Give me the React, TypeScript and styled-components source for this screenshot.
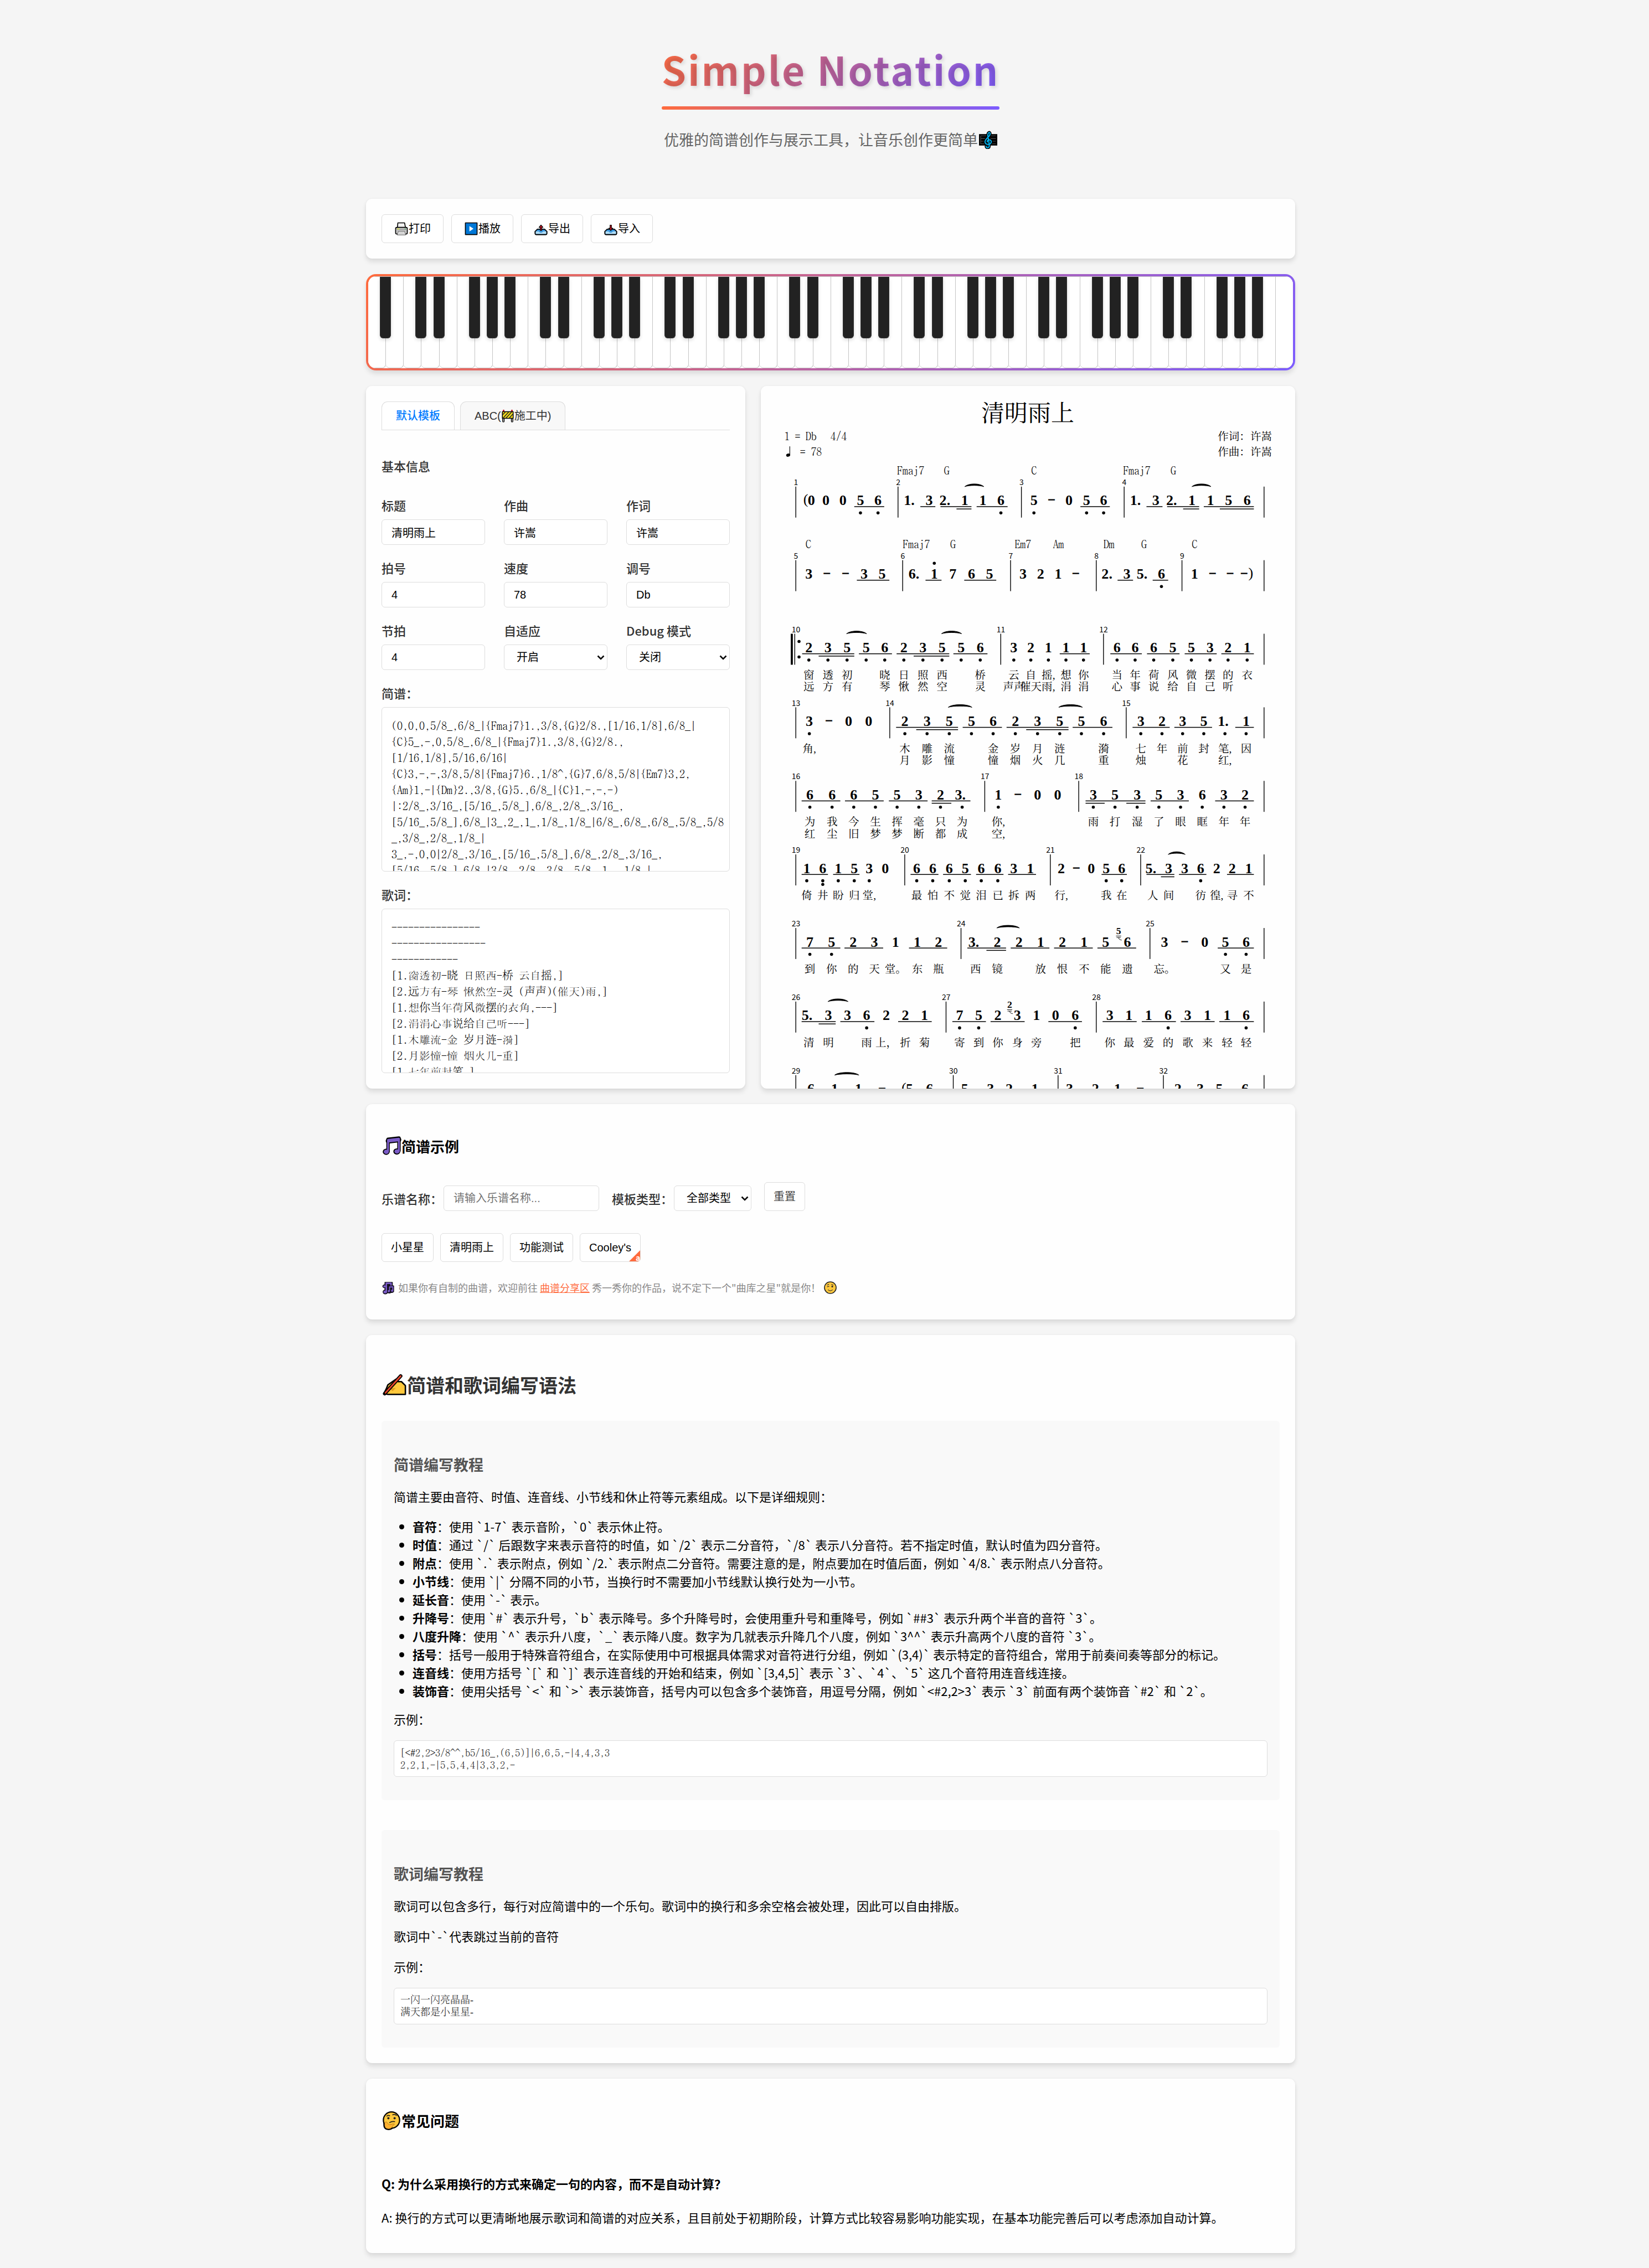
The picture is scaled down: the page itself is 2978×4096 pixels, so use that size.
import React from "react";
import type { ReactNode } from "react";
import styled, { createGlobalStyle, css } from "styled-components";

/* ---------- tokens ---------- */

const sans = `"Noto Sans CJK SC", "Noto Sans", sans-serif`;
const control = `"Liberation Sans", "Noto Sans CJK SC", sans-serif`;
const mono = `"BatangChe", "Noto Serif CJK SC", "Noto Sans Mono CJK SC", monospace`;
const song = `"Liberation Serif", "Noto Serif CJK SC", "Noto Sans CJK SC", serif`;

const orange = "#ff6b3d";
const violet = "#7c5cff";
const line = "#dddddd";

const GlobalStyle = createGlobalStyle`
  *, *::before, *::after { box-sizing: border-box; }
  body {
    margin: 0;
    padding: 72px 0 27px 22px;
    background: #f5f5f5;
    color: #000;
    font: 22px/33px ${sans};
  }
  h1, h2, h3, p, ul, pre { margin: 0; }
`;

/* ---------- layout ---------- */

const Container = styled.div`
  max-width: 1678px;
  margin: 0 auto;
  display: flex;
  flex-direction: column;
  gap: 28px;
`;

const Header = styled.header`
  display: flex;
  flex-direction: column;
  align-items: center;
  padding-bottom: 87px;
`;

const Title = styled.h1`
  font-size: 71px;
  line-height: 104px;
  font-weight: 700;
  letter-spacing: 3px;
  color: transparent;
  background: linear-gradient(135deg, ${orange}, ${violet});
  background-clip: text;
  -webkit-background-clip: text;
  text-shadow: 3px 3px 6px rgba(0, 0, 0, 0.12);
`;

const TitleBlock = styled.div`
  display: flex;
  flex-direction: column;
  gap: 16px;
  &::after {
    content: "";
    height: 6px;
    border-radius: 3px;
    background: linear-gradient(90deg, ${orange}, ${violet});
  }
`;

const Subtitle = styled.p`
  display: flex;
  align-items: center;
  gap: 2px;
  margin-top: 34px;
  font-size: 27px;
  line-height: 40px;
  color: #666;
`;

const Card = styled.section`
  padding: 28px;
  border-radius: 11px;
  background: #fefefe;
  box-shadow: 0 6px 8px rgba(0, 0, 0, 0.1), 0 0 4px rgba(0, 0, 0, 0.05);
`;

const ButtonRow = styled.div<{ $gap: number }>`
  display: flex;
  flex-wrap: wrap;
  gap: ${(p) => p.$gap}px;
`;

const buttonFace = css`
  height: 52px;
  border: 1px solid ${line};
  border-radius: 6px;
  background: #fff;
  color: #000;
  font: 20px/30px ${control};
`;

const ToolButton = styled.button`
  ${buttonFace}
  display: flex;
  align-items: center;
  padding: 0 22px;
`;

const Chip = styled.button<{ $muted?: boolean }>`
  ${buttonFace}
  position: relative;
  padding: 0 16px;
  color: ${(p) => (p.$muted ? "#444" : "#000")};
`;

const ChipBadge = styled.span`
  position: absolute;
  right: 0;
  bottom: 0;
  width: 20px;
  height: 20px;
  overflow: hidden;
  padding-left: 12px;
  border-radius: 0 0 5px 0;
  clip-path: polygon(100% 0, 100% 100%, 0 100%);
  background: ${orange};
  color: #fff;
  font: 700 14px/26px ${sans};
`;

/* ---------- piano ---------- */

const PianoFrame = styled.section`
  height: 174px;
  padding: 4px;
  border-radius: 18px;
  background: linear-gradient(135deg, ${orange}, ${violet});
  box-shadow: 0 6px 8px rgba(0, 0, 0, 0.1);
`;

const Keys = styled.div`
  display: flex;
  height: 100%;
  overflow: hidden;
  border-radius: 14px;
  background: #fff;
`;

const WhiteKey = styled.div`
  position: relative;
  flex: 1;
  border: 1px solid #c4c4c4;
  border-left-width: 0;
  border-radius: 0 0 7px 7px;
  background: #fff;
  &:last-child { border-right-width: 0; }
`;

const BlackKey = styled.div`
  position: absolute;
  z-index: 1;
  top: 0;
  left: 100%;
  width: 20px;
  height: 111px;
  margin-left: -10px;
  border: 1px solid #333;
  border-top: 0;
  border-radius: 0 0 6px 6px;
  background: #222;
  box-shadow: 0 3px 6px rgba(0, 0, 0, 0.15);
`;

/* ---------- editor ---------- */

const Workspace = styled.div`
  display: grid;
  grid-template-columns: minmax(0, 685fr) minmax(0, 965fr);
  gap: 28px;
`;

const Tabs = styled.div`
  display: flex;
  gap: 10px;
  height: 52px;
  border-bottom: 1px solid ${line};
`;

const Tab = styled.button<{ $active?: boolean }>`
  display: flex;
  align-items: center;
  height: 51px;
  padding: 0 25px;
  border: 1px solid ${line};
  border-bottom: 0;
  border-radius: 11px 11px 0 0;
  background: ${(p) => (p.$active ? "#fff" : "#f8f8f8")};
  color: ${(p) => (p.$active ? "#007bff" : "#333")};
  font: ${(p) => (p.$active ? 500 : 400)} 20px/30px ${control};
`;

const FormTitle = styled.h3`
  margin: 48px 0 39px;
  font-size: 22px;
  line-height: 32px;
  font-weight: 500;
  color: #333;
`;

const Fields = styled.div`
  display: grid;
  grid-template-columns: repeat(3, minmax(0, 1fr));
  gap: 25px 34px;
  margin-bottom: 25px;
`;

const Field = styled.div`
  display: flex;
  flex-direction: column;
  gap: 10px;
  & + & { min-width: 0; }
`;

const Stack = styled.div`
  display: flex;
  flex-direction: column;
  gap: 25px;
`;

const Label = styled.label`
  font-size: 22px;
  line-height: 32px;
  font-weight: 500;
  color: #333;
`;

const boxFace = css`
  width: 100%;
  height: 46px;
  border: 1px solid ${line};
  border-radius: 6px;
  background: #fff;
  color: #000;
  font: 20px/30px ${control};
`;

const Input = styled.input`
  ${boxFace}
  padding: 0 17px;
  &::placeholder { color: #757575; opacity: 1; }
`;

const SelectBox = styled.span`
  position: relative;
  display: block;
`;

const SelectFace = styled.select`
  ${boxFace}
  appearance: none;
  padding: 0 22px;
`;

const Chevron = styled.svg`
  position: absolute;
  right: 5px;
  top: 50%;
  width: 14px;
  height: 14px;
  margin-top: -7px;
  pointer-events: none;
`;

const TextArea = styled.textarea`
  display: block;
  width: 100%;
  height: 297px;
  padding: 17px 8px 17px 17px;
  border: 1px solid ${line};
  border-radius: 6px;
  background: #fff;
  color: #000;
  font: 300 20px/29px ${mono};
  white-space: pre;
  overflow: hidden;
  resize: none;
`;

const SheetCard = styled(Card)`
  padding: 0;
  overflow: hidden;
`;

const SheetSvg = styled.svg`
  display: block;
  width: 100%;
  overflow: visible;
  fill: #000;
  font-family: ${song};
`;

/* ---------- text sections ---------- */

const CardTitle = styled.h3`
  display: flex;
  align-items: center;
  padding-top: 29px;
  font-size: 26px;
  line-height: 38px;
  font-weight: 700;
`;

const GuideTitle = styled.h2`
  display: flex;
  align-items: center;
  padding-top: 37px;
  margin-bottom: 40px;
  font-size: 34px;
  line-height: 50px;
  font-weight: 700;
  color: #333;
`;

const FilterRow = styled.div`
  display: flex;
  flex-wrap: wrap;
  align-items: flex-end;
  gap: 23px;
  margin: 46px 0 40px;
`;

const FilterItem = styled.div<{ $control: number }>`
  display: grid;
  grid-template-columns: auto ${(p) => p.$control}px;
  gap: 2px;
  & > label { line-height: 46px; }
`;

const Hint = styled.p`
  display: flex;
  align-items: center;
  gap: 5px;
  padding-bottom: 16px;
  margin-top: 32px;
  font-size: 18px;
  line-height: 28px;
  color: #888;
`;

const HintLink = styled.a`
  color: ${orange};
  text-decoration: underline;
`;

const Guide = styled.article`
  padding: 59px 22px 42px;
  border-radius: 6px;
  background: #f9f9f9;
  & + & { margin-top: 54px; }
`;

const GuideHeading = styled.h3`
  margin-bottom: 21px;
  font-size: 27px;
  line-height: 40px;
  font-weight: 700;
  color: #555;
`;

const Paragraph = styled.p`
  margin-bottom: 22px;
`;

const Rules = styled.ul`
  margin: -1px 0 18px;
  padding-left: 34px;
`;

const CodeBlock = styled.pre<{ $prose?: boolean }>`
  padding: 10px 11px;
  border: 1px solid ${line};
  border-radius: 6px;
  background: #fff;
  color: #222;
  font: 300 18px/22px ${(p) => (p.$prose ? song : mono)};
  overflow: hidden;
`;

const Question = styled.p`
  margin: 78px 0 28px;
  font-weight: 700;
`;

const Answer = styled.p`
  padding-bottom: 20px;
`;

/* ---------- pictograms ---------- */

const Picto = styled.svg<{ $size: number }>`
  flex: none;
  width: ${(p) => p.$size}px;
  height: ${(p) => p.$size}px;
`;

const Icon = ({ size, children, label }: { size: number; label: string; children: ReactNode }) => (
  <Picto $size={size} viewBox="0 0 32 32" role="img" aria-label={label} strokeLinejoin="round" strokeLinecap="round">
    {children}
  </Picto>
);

const clefPath =
  "M12.500 27.500C13 31 18 30.500 18 27C18 21 16 14 15.500 8C15.300 3 19 1.500 19.500 5C20 11 10.500 13 10.500 19.500C10.500 25.500 21.500 25.500 21.500 19.500C21.500 14.500 14 15 14.500 19.500";

const Clef = () => (
  <Icon size={33} label="乐谱">
    <rect x="0" y="6" width="32" height="20" fill="#000" />
    <path d="M3 9V23M3 9H29M3 13.700H29M3 18.400H29M3 23H29" stroke="#555" strokeWidth="1" fill="none" />
    <path d={clefPath} stroke="#000" strokeWidth="5" fill="none" />
    <path d={clefPath} stroke="#00b4f0" strokeWidth="2" fill="none" />
  </Icon>
);

const Printer = () => (
  <Icon size={26} label="打印机">
    <path d="M8 3H23L25 14H7Z" fill="#f2f2f2" stroke="#000" strokeWidth="2" />
    <rect x="3" y="13" width="26" height="15" rx="3" fill="#c4c4c4" stroke="#000" strokeWidth="2" />
    <path d="M4 18H28" stroke="#999" strokeWidth="1.500" />
    <path d="M7 16.500H11" stroke="#e6f05a" strokeWidth="2" />
    <path d="M24 16.500H25" stroke="#5cc080" strokeWidth="2" />
    <path d="M9 22H23L25 30H7Z" fill="#f2f2f2" stroke="#777" strokeWidth="1.500" />
    <path d="M11 25H21M10.500 27.500H21.500" stroke="#aaa" strokeWidth="1" />
  </Icon>
);

const Play = () => (
  <Icon size={26} label="播放键">
    <rect x="3" y="3" width="26" height="26" fill="#0078d7" stroke="#000" strokeWidth="2" />
    <path d="M12 10L21 16L12 22Z" fill="#fff" />
  </Icon>
);

const Tray = ({ up }: { up?: boolean }) => (
  <Icon size={26} label={up ? "发件箱" : "收件箱"}>
    <path d="M8 17H24L29 22V27Q29 29 27 29H5Q3 29 3 27V22Z" fill="#3a96dd" stroke="#000" strokeWidth="2" />
    <path d="M4 22H11Q16 28 21 22H28V28H4Z" fill="#b0dcf5" />
    <path d="M3 22V27Q3 29 5 29H27Q29 29 29 27V22" fill="none" stroke="#000" strokeWidth="2" />
    <path d={up ? "M16 8L20.500 13H17.500V20H14.500V13H11.500Z" : "M14.500 8H17.500V15H20.500L16 20L11.500 15H14.500Z"} fill="#e81224" stroke="#000" strokeWidth="1.500" />
  </Icon>
);

const Barrier = () => (
  <Icon size={24} label="施工">
    <path d="M5.500 21V29M26.500 21V29" stroke="#000" strokeWidth="5.500" />
    <path d="M5.500 21V29M26.500 21V29" stroke="#999" strokeWidth="2.500" />
    <path d="M6 3V5M26 3V5" stroke="#c0202a" strokeWidth="4" />
    <rect x="3" y="6" width="26" height="16" fill="#f4dc1c" stroke="#000" strokeWidth="2" />
    <path d="M4 13L10 7M5 21L18 7M12 21L25 7M20 21L28 12" stroke="#222" strokeWidth="2" />
  </Icon>
);

const Music = () => (
  <Icon size={36} label="音符">
    <path d="M10.500 24V5L28 3V23" fill="none" stroke="#000" strokeWidth="5.500" />
    <path d="M11 7.500L27.500 5.500" stroke="#000" strokeWidth="8.500" />
    <ellipse cx="7.500" cy="25" rx="5.500" ry="5" fill="#000" />
    <ellipse cx="24.500" cy="24.500" rx="5.500" ry="5" fill="#000" />
    <path d="M10.500 24V6L28 4V24" fill="none" stroke="#7a5bc7" strokeWidth="3" />
    <path d="M11.500 7.500L27 5.700" stroke="#7a5bc7" strokeWidth="5" />
    <ellipse cx="7.700" cy="25" rx="4" ry="3.500" fill="#7a5bc7" />
    <ellipse cx="24.800" cy="24.500" rx="4" ry="3.500" fill="#7a5bc7" />
  </Icon>
);

const Notes = () => (
  <Icon size={25} label="音符">
    <path d="M11 4H25V12H28V25Q26 28 22 27Q18 30 14 27Q12 31 7 30Q3 29 4 24Q6 21 8 21V16Q3 16 3 12Q5 9 8 9V4Z" fill="#15101f" stroke="#15101f" strokeWidth="2" />
    <path d="M11 25V6H22V10" fill="none" stroke="#7a5bc7" strokeWidth="3.500" />
    <ellipse cx="7" cy="13" rx="3" ry="2.500" fill="#7a5bc7" />
    <ellipse cx="8.500" cy="26" rx="4" ry="3.200" fill="#7a5bc7" />
    <path d="M18.500 23V14.500L26 14V22" fill="none" stroke="#7a5bc7" strokeWidth="2.500" />
    <circle cx="16.800" cy="24" r="2.600" fill="#7a5bc7" />
    <circle cx="24.500" cy="23" r="2.600" fill="#7a5bc7" />
  </Icon>
);

const Wink = () => (
  <Icon size={25} label="眨眼">
    <circle cx="16" cy="16" r="13.500" fill="#ffc83d" stroke="#222" strokeWidth="2" />
    <circle cx="20.500" cy="13.500" r="2" fill="#222" />
    <path d="M9 14L13 13M9 10L12.500 8.500M18.500 9L22.500 10M11 21Q16 25.500 21 21" stroke="#333" strokeWidth="1.500" fill="none" />
  </Icon>
);

const Writing = () => (
  <Icon size={46} label="书写">
    <path d="M3 27L6 21L8 16L18 9L21 12L25 12L30 17V28H8Z" fill="#ffc83d" stroke="#000" strokeWidth="1.800" />
    <path d="M9 20L18 20L14 24Z" fill="#e0a020" />
    <path d="M4 27L24 5" stroke="#000" strokeWidth="4.500" />
    <path d="M5 26L24 5" stroke="#e8452c" strokeWidth="2" />
  </Icon>
);

const Thinking = () => (
  <Icon size={36} label="思考">
    <circle cx="16" cy="15" r="13" fill="#ffc83d" stroke="#000" strokeWidth="2" />
    <path d="M5 19Q4 30 11 30Q17 30 17.500 24.500L21 21.500L19 21L12 22.500L8 18Z" fill="#ffb02e" stroke="#b07818" strokeWidth="0.800" />
    <path d="M4 20Q3 30 11 30Q15 30 17 28" fill="none" stroke="#000" strokeWidth="2" />
    <circle cx="11" cy="12" r="1.800" fill="#222" />
    <circle cx="21" cy="12" r="1.800" fill="#222" />
    <path d="M8.500 8.500Q11 6.500 13 8M18 6.500Q21 5 24 7.500M13 19Q17 16.500 21 17.500" stroke="#222" strokeWidth="1.500" fill="none" />
  </Icon>
);

/* ---------- numbered notation ---------- */

type Row = {
  bars: string;
  chords?: string;
  notes: string;
  beams: string;
  beams2?: string;
  ties?: string;
  marks?: string;
  grace?: string;
  repeat?: boolean;
  lyrics?: string[];
};

/* Entries read "symbol:x"; a note may carry "." (dotted), "_" / "__" (lower octaves) or "^" (upper octave). */
const rows: Row[] = [
  {
    bars: "1:68 2:266 3:505 4:704",
    chords: "Fmaj7:264 G:355 C:524 Fmaj7:702 G:794",
    marks: "(:87",
    notes: "0:98 0:126 0:159 5_:193 6_:227 1.:291 3:326 2.:360 1:395 1:430 6_:465 5_:529 -:563 0:597 5_:631 6_:664 1.:729 3:765 2.:799 1:835 1:871 5:906 6:942",
    beams: "181:239 309:338 348:408 418:478 619:676 747:778 787:849 858:955",
    beams2: "379:408 818:849 889:955",
    ties: "395:432 835:872",
  },
  {
    bars: "5:68 6:275 7:484 8:650 9:816",
    chords: "C:87 Fmaj7:275 G:367 Em7:492 Am:566 Dm:664 G:737 C:835",
    marks: "):949",
    notes: "3:93 -:128 -:164 3:200 5:235 6.:300 1^:336 7:372 6:408 5:443 3:508 2:542 1:576 -:610 2.:674 3:709 5.:742 6_:776 1:840 -:875 -:909 -:936",
    beams: "186:249 319:350 394:456 691:721 759:789",
  },
  {
    repeat: true,
    bars: "10:68 11:465 12:664",
    notes: "2_:93 3_:130 5_:167 5_:204 6_:240 2_:277 3_:314 5_:351 5_:388 6_:425 3_:490 2_:523 1_:557 1_:591 1_:625 6_:690 6_:725 6_:761 5_:798 5_:834 3_:870 2_:905 1_:942",
    beams: "80:181 190:254 263:365 373:439 579:637 677:738 748:811 821:883 892:955",
    beams2: "112:181 296:365",
    ties: "166:205 350:389",
    lyrics: [
      "窗 透 初 . 晓 日 照 西 . 桥 云 自 摇, 想 你 当 年 荷 风 微 摆 的 衣",
      "远 方 有 . 琴 愀 然 空 . 灵 声声 催天 雨, 涓 涓 心 事 说 给 自 己 听",
    ],
  },
  {
    bars: "13:68 14:250 15:708",
    notes: "3_:94 -:132 0:170 0:209 2_:279 3_:322 5_:365 5_:408 6_:450 2_:493 3_:536 5_:579 5_:621 6_:664 3_:736 2_:777 3_:817 5_:858 1._:899 1_:940",
    beams: "262:382 391:467 476:596 604:681 720:792 801:874 919:955",
    beams2: "301:382 514:596",
    ties: "363:409 577:623",
    lyrics: [
      "角, . . . 木 雕 流 . 金 岁 月 涟 . 漪 七 年 前 封 笔, 因",
      ". . . . 月 影 憧 . 憧 烟 火 几 . 重 烛 . 花 . 红,",
    ],
  },
  {
    bars: "16:68 17:434 18:616",
    notes: "6_:95 6_:138 6_:180 5_:222 5_:264 3_:306 2_:348 3._:390 1_:460 -:498 0:536 0:575 3_:644 5_:686 3_:729 5_:771 3_:813 6_:855 3_:897 2_:938",
    beams: "79:154 163:238 248:323 331:406 629:745 755:829 880:955",
    beams2: "331:369 629:666 708:745",
    lyrics: ["为 我 今 生 挥 毫 只 为 你, . . . 雨 打 湿 了 眼 眶 年 年", "红 尘 旧 梦 梦 断 都 成 空,"],
  },
  {
    bars: "19:68 20:279 21:561 22:736",
    notes: "1_:89 6__:120 1_:150 5_:181 3_:210 0:241 6_:302 6_:333 6_:365 5_:396 6_:427 6_:459 3:490 1:522 2:582 -:611 0:640 5_:669 6_:699 5.:759 3:790 3:821 6_:852 2:883 2:913 1:945",
    beams: "79:130 140:191 290:344 353:407 417:470 479:533 660:709 747:801 810:863 903:955",
    beams2: "775:801",
    ties: "789:822",
    lyrics: ["倚 井 盼 归 堂, . 最 怕 不 觉 泪 已 拆 两 行, . . 我 在 人 间 . 彷 徨, 寻 不"],
  },
  {
    bars: "23:68 24:388 25:754",
    notes: "7_:95 5_:137 2:179 3:220 1:261 1:303 2:344 3.:416 2:458 2:500 1:542 2:584 1:626 5:668 6:710 3:782 -:821 0:860 5_:900 6_:940",
    beams: "79:154 162:237 287:361 400:475 484:559 568:643 652:727 885:955",
    beams2: "437:475",
    ties: "457:501",
    grace: "5:693",
    lyrics: ["到 你 的 天 堂。 东 瓶 西 镜 . 放 恨 不 能 遗 忘。 . . 又 是"],
  },
  {
    bars: "26:68 27:359 28:650",
    notes: "5.:93 3:131 3:168 6_:205 2:243 2:280 1:317 7_:385 5_:422 2:459 3:497 1:534 0:571 6_:609 3:676 1:713 1:751 6_:789 3:827 1:865 1:903 6_:940",
    beams: "79:145 154:220 266:331 371:436 445:511 557:622 662:728 738:804 813:879 888:955",
    beams2: "112:145",
    ties: "130:169",
    grace: "2:482",
    lyrics: ["清 明 . 雨 上， 折 菊 寄 到 你 身 旁 . 把 你 最 爱 的 歌 来 轻 轻"],
  },
  {
    bars: "29:68 30:373 31:576 32:780",
    marks: "(:277",
    notes: "6:97 1:143 1:189 -:235 5:288 6:327 5:395 3:445 2:481 1:531 3:598 2:648 1:691 -:735 2:808 3:851 5:888 6:938",
    beams: "",
    ties: "143:190",
  },
];

const FIRST_ROW = 195;
const ROW_STEP = 285 / 2;
const END_BAR = 975;

const parse = (source = ""): [string, number][] =>
  source
    .split(" ")
    .filter(Boolean)
    .map((item) => {
      const [name, x] = item.split(":");
      return [name, Number(x)];
    });

const NoteText = styled.text`
  font-size: 28px;
  font-weight: 700;
`;
const DashText = styled.text`
  font-family: ${mono};
  font-size: 28px;
  font-weight: 700;
  text-anchor: middle;
`;
const GraceText = styled.text`
  font-size: 19px;
  font-weight: 700;
  text-anchor: middle;
`;
const SheetText = styled.text<{ $end?: boolean }>`
  font-family: ${(p) => (p.$end ? song : mono)};
  font-size: 21px;
  text-anchor: ${(p) => (p.$end ? "end" : "start")};
`;
const LyricText = styled.text`
  font-size: 21px;
  text-anchor: middle;
`;
const BarNumber = styled.text`
  font-family: ${sans};
  font-size: 15px;
  text-anchor: middle;
`;
const SheetTitle = styled.text`
  font-size: 45px;
  font-weight: 400;
  text-anchor: middle;
`;

const tiePath = (a: number, b: number) =>
  `M${a} 0C${a + 7} -7 ${b - 7} -7 ${b} 0C${b - 9} -3 ${a + 9} -3 ${a} 0Z`;

const SheetRow = ({ row, top }: { row: Row; top: number }) => {
  const notes = parse(row.notes);
  return (
    <g transform={`translate(0 ${top})`}>
      {parse(row.bars).map(([number, x], i) => (
        <g key={number}>
          <BarNumber x={x} y={-3}>{number}</BarNumber>
          <rect x={row.repeat && i === 0 ? x - 3 : x - 1} width="1.5" height="60" />
        </g>
      ))}
      <rect x={END_BAR - 1} width="1.5" height="60" />
      {row.repeat && (
        <g>
          <rect x="58" width="4" height="60" />
          <circle cx="74" cy="15" r="3" />
          <circle cx="74" cy="45" r="3" />
        </g>
      )}
      {parse(row.chords).map(([name, x]) => (
        <SheetText key={x} x={x} y={-23}>{name}</SheetText>
      ))}
      {parse(row.marks).map(([name, x]) => (
        <text key={x} x={x} y={34} fontSize="28" textAnchor="middle">{name}</text>
      ))}
      {notes.map(([name, x]) => {
        const label = name.replace(/[_^]/g, "");
        const low = name.split("_").length - 1;
        const dotted = label.length > 1;
        return (
          <g key={x}>
            {label === "-" ? (
              <DashText x={x} y={36}>-</DashText>
            ) : (
              <NoteText x={dotted ? x - 14 : x - 7} y={36}>{label}</NoteText>
            )}
            {low > 0 && <circle cx={x} cy="51" r="3" />}
            {low > 1 && <circle cx={x} cy="58" r="3" />}
            {name.includes("^") && <circle cx={x} cy="6" r="3" />}
          </g>
        );
      })}
      {row.beams && row.beams.split(" ").map((b) => {
        const [a, z] = b.split(":").map(Number);
        return <rect key={b} x={a} y="38" width={z - a} height="1.600" />;
      })}
      {row.beams2 && row.beams2.split(" ").map((b) => {
        const [a, z] = b.split(":").map(Number);
        return <rect key={b} x={a} y="42.500" width={z - a} height="1.600" />;
      })}
      {row.ties && row.ties.split(" ").map((b) => {
        const [a, z] = b.split(":").map(Number);
        return <path key={b} d={tiePath(a, z)} stroke="#000" strokeWidth="1" />;
      })}
      {parse(row.grace).map(([name, x]) => (
        <g key={x}>
          <GraceText x={x} y={12}>{name}</GraceText>
          <path d={`M${x - 5} 15.500H${x + 5}M${x - 4} 18.500H${x + 4}M${x} 18.500q0 4 6 5`} fill="none" stroke="#000" strokeWidth="1" />
        </g>
      ))}
      {(row.lyrics || []).map((text, verse) =>
        text.split(" ").map((word, i) =>
          word === "." ? null : (
            <LyricText key={`${verse}-${i}`} x={notes[i][1]} y={87 + verse * 23}>{word}</LyricText>
          )
        )
      )}
    </g>
  );
};

const Sheet = () => (
  <SheetSvg viewBox="0 0 1035 1350" role="img" aria-label="清明雨上">
    <SheetTitle x={517} y={69}>清明雨上</SheetTitle>
    <SheetText x={45} y={105}>1 = Db</SheetText>
    <SheetText x={135} y={105}>4/4</SheetText>
    <ellipse cx="53" cy="134" rx="4" ry="3" transform="rotate(-20 53 134)" />
    <rect x="55.500" y="117" width="1.200" height="16" />
    <SheetText x={76} y={135}>= 78</SheetText>
    <SheetText $end x={990} y={105}>作词：许嵩</SheetText>
    <SheetText $end x={990} y={135}>作曲：许嵩</SheetText>
    {rows.map((row, i) => (
      <SheetRow key={row.bars} row={row} top={FIRST_ROW + i * ROW_STEP} />
    ))}
  </SheetSvg>
);

/* ---------- parts ---------- */

/* 52 white keys from A0; a black key follows A, C, D, F and G. */
const hasBlack = (i: number) => i < 51 && ![1, 4].includes(i % 7);

const Piano = () => (
  <PianoFrame aria-label="钢琴键盘">
    <Keys>
      {Array.from({ length: 52 }, (_, i) => (
        <WhiteKey key={i}>{hasBlack(i) && <BlackKey />}</WhiteKey>
      ))}
    </Keys>
  </PianoFrame>
);

const Select = ({ id, value }: { id: string; value: string }) => (
  <SelectBox>
    <SelectFace id={id} defaultValue={value}>
      <option>{value}</option>
    </SelectFace>
    <Chevron viewBox="0 0 14 14" aria-hidden="true">
      <path d="M1.500 4.500L7 10L12.500 4.500" fill="none" stroke="#000" strokeWidth="2.500" />
    </Chevron>
  </SelectBox>
);

const fields = [
  { id: "title", label: "标题", value: "清明雨上" },
  { id: "composer", label: "作曲", value: "许嵩" },
  { id: "lyricist", label: "作词", value: "许嵩" },
  { id: "time", label: "拍号", value: "4" },
  { id: "tempo", label: "速度", value: "78" },
  { id: "key", label: "调号", value: "Db" },
  { id: "beat", label: "节拍", value: "4" },
  { id: "resize", label: "自适应", value: "开启", select: true },
  { id: "debug", label: "Debug 模式", value: "关闭", select: true },
];

const score = `(0,0,0,5/8_,6/8_|{Fmaj7}1.,3/8,{G}2/8.,[1/16,1/8],6/8_|
{C}5_,-,0,5/8_,6/8_|{Fmaj7}1.,3/8,{G}2/8.,
[1/16,1/8],5/16,6/16|
{C}3,-,-,3/8,5/8|{Fmaj7}6.,1/8^,{G}7,6/8,5/8|{Em7}3,2,
{Am}1,-|{Dm}2.,3/8,{G}5.,6/8_|{C}1,-,-,-)
|:2/8_,3/16_,[5/16_,5/8_],6/8_,2/8_,3/16_,
[5/16_,5/8_],6/8_|3_,2_,1_,1/8_,1/8_|6/8_,6/8_,6/8_,5/8_,5/8
_,3/8_,2/8_,1/8_|
3_,-,0,0|2/8_,3/16_,[5/16_,5/8_],6/8_,2/8_,3/16_,
[5/16_,5/8_],6/8_|3/8_,2/8_,3/8_,5/8_,1._,1/8_|`;

const lyric = `----------------
-----------------
------------
[1.窗透初-晓 日照西-桥 云自摇,]
[2.远方有-琴 愀然空-灵 (声声)(催天)雨,]
[1.想你当年荷风微摆的衣角,---]
[2.涓涓心事说给自己听---]
[1.木雕流-金 岁月涟-漪]
[2.月影憧-憧 烟火几-重]
[1.七年前封笔,]`;

const rules = [
  ["音符", "使用 `1-7` 表示音阶，`0` 表示休止符。"],
  ["时值", "通过 `/` 后跟数字来表示音符的时值，如 `/2` 表示二分音符，`/8` 表示八分音符。若不指定时值，默认时值为四分音符。"],
  ["附点", "使用 `.` 表示附点，例如 `/2.` 表示附点二分音符。需要注意的是，附点要加在时值后面，例如 `4/8.` 表示附点八分音符。"],
  ["小节线", "使用 `|` 分隔不同的小节，当换行时不需要加小节线默认换行处为一小节。"],
  ["延长音", "使用 `-` 表示。"],
  ["升降号", "使用 `#` 表示升号，`b` 表示降号。多个升降号时，会使用重升号和重降号，例如 `##3` 表示升两个半音的音符 `3`。"],
  ["八度升降", "使用 `^` 表示升八度，`_` 表示降八度。数字为几就表示升降几个八度，例如 `3^^` 表示升高两个八度的音符 `3`。"],
  ["括号", "括号一般用于特殊音符组合，在实际使用中可根据具体需求对音符进行分组，例如 `(3,4)` 表示特定的音符组合，常用于前奏间奏等部分的标记。"],
  ["连音线", "使用方括号 `[` 和 `]` 表示连音线的开始和结束，例如 `[3,4,5]` 表示 `3`、`4`、`5` 这几个音符用连音线连接。"],
  ["装饰音", "使用尖括号 `<` 和 `>` 表示装饰音，括号内可以包含多个装饰音，用逗号分隔，例如 `<#2,2>3` 表示 `3` 前面有两个装饰音 `#2` 和 `2`。"],
];

export default function App() {
  return (
    <>
      <GlobalStyle />
      <Header>
        <TitleBlock>
          <Title>Simple Notation</Title>
        </TitleBlock>
        <Subtitle>
          <span>优雅的简谱创作与展示工具，让音乐创作更简单</span>
          <Clef />
        </Subtitle>
      </Header>
      <Container as="main">
        <Card>
          <ButtonRow $gap={14}>
            <ToolButton type="button"><Printer />打印</ToolButton>
            <ToolButton type="button"><Play />播放</ToolButton>
            <ToolButton type="button"><Tray up />导出</ToolButton>
            <ToolButton type="button"><Tray />导入</ToolButton>
          </ButtonRow>
        </Card>

        <Piano />

        <Workspace>
          <Card>
            <Tabs role="tablist">
              <Tab type="button" role="tab" aria-selected="true" $active>默认模板</Tab>
              <Tab type="button" role="tab" aria-selected="false">ABC(<Barrier />施工中)</Tab>
            </Tabs>
            <FormTitle>基本信息</FormTitle>
            <Fields>
              {fields.map((f) => (
                <Field key={f.id}>
                  <Label htmlFor={f.id}>{f.label}</Label>
                  {f.select ? <Select id={f.id} value={f.value} /> : <Input id={f.id} defaultValue={f.value} />}
                </Field>
              ))}
            </Fields>
            <Stack>
              <Field>
                <Label htmlFor="score">简谱：</Label>
                <TextArea id="score" defaultValue={score} spellCheck={false} />
              </Field>
              <Field>
                <Label htmlFor="lyric">歌词：</Label>
                <TextArea id="lyric" defaultValue={lyric} spellCheck={false} />
              </Field>
            </Stack>
          </Card>
          <SheetCard>
            <Sheet />
          </SheetCard>
        </Workspace>

        <Card>
          <CardTitle><Music />简谱示例</CardTitle>
          <FilterRow>
            <FilterItem $control={281}>
              <Label htmlFor="filter-name">乐谱名称：</Label>
              <Input id="filter-name" placeholder="请输入乐谱名称..." />
            </FilterItem>
            <FilterItem $control={140}>
              <Label htmlFor="filter-type">模板类型：</Label>
              <Select id="filter-type" value="全部类型" />
            </FilterItem>
            <Chip type="button" $muted>重置</Chip>
          </FilterRow>
          <ButtonRow $gap={12}>
            <Chip type="button">小星星</Chip>
            <Chip type="button">清明雨上</Chip>
            <Chip type="button">功能测试</Chip>
            <Chip type="button">Cooley's<ChipBadge>a</ChipBadge></Chip>
          </ButtonRow>
          <Hint>
            <Notes />
            <span>
              如果你有自制的曲谱，欢迎前往 <HintLink href="#share">曲谱分享区</HintLink> 秀一秀你的作品，说不定下一个"曲库之星"就是你！
            </span>
            <Wink />
          </Hint>
        </Card>

        <Card>
          <GuideTitle><Writing />简谱和歌词编写语法</GuideTitle>
          <Guide>
            <GuideHeading>简谱编写教程</GuideHeading>
            <Paragraph>简谱主要由音符、时值、连音线、小节线和休止符等元素组成。以下是详细规则：</Paragraph>
            <Rules>
              {rules.map(([name, text]) => (
                <li key={name}><strong>{name}</strong>：{text}</li>
              ))}
            </Rules>
            <Paragraph>示例：</Paragraph>
            <CodeBlock>{"[<#2,2>3/8^^,b5/16_,(6,5)]|6,6,5,-|4,4,3,3\n2,2,1,-|5,5,4,4|3,3,2,-"}</CodeBlock>
          </Guide>
          <Guide>
            <GuideHeading>歌词编写教程</GuideHeading>
            <Paragraph>歌词可以包含多行，每行对应简谱中的一个乐句。歌词中的换行和多余空格会被处理，因此可以自由排版。</Paragraph>
            <Paragraph>歌词中`-`代表跳过当前的音符</Paragraph>
            <Paragraph>示例：</Paragraph>
            <CodeBlock $prose>{"一闪一闪亮晶晶-\n满天都是小星星-"}</CodeBlock>
          </Guide>
        </Card>

        <Card>
          <CardTitle><Thinking />常见问题</CardTitle>
          <Question>Q: 为什么采用换行的方式来确定一句的内容，而不是自动计算？</Question>
          <Answer>A: 换行的方式可以更清晰地展示歌词和简谱的对应关系，且目前处于初期阶段，计算方式比较容易影响功能实现，在基本功能完善后可以考虑添加自动计算。</Answer>
        </Card>
      </Container>
    </>
  );
}
